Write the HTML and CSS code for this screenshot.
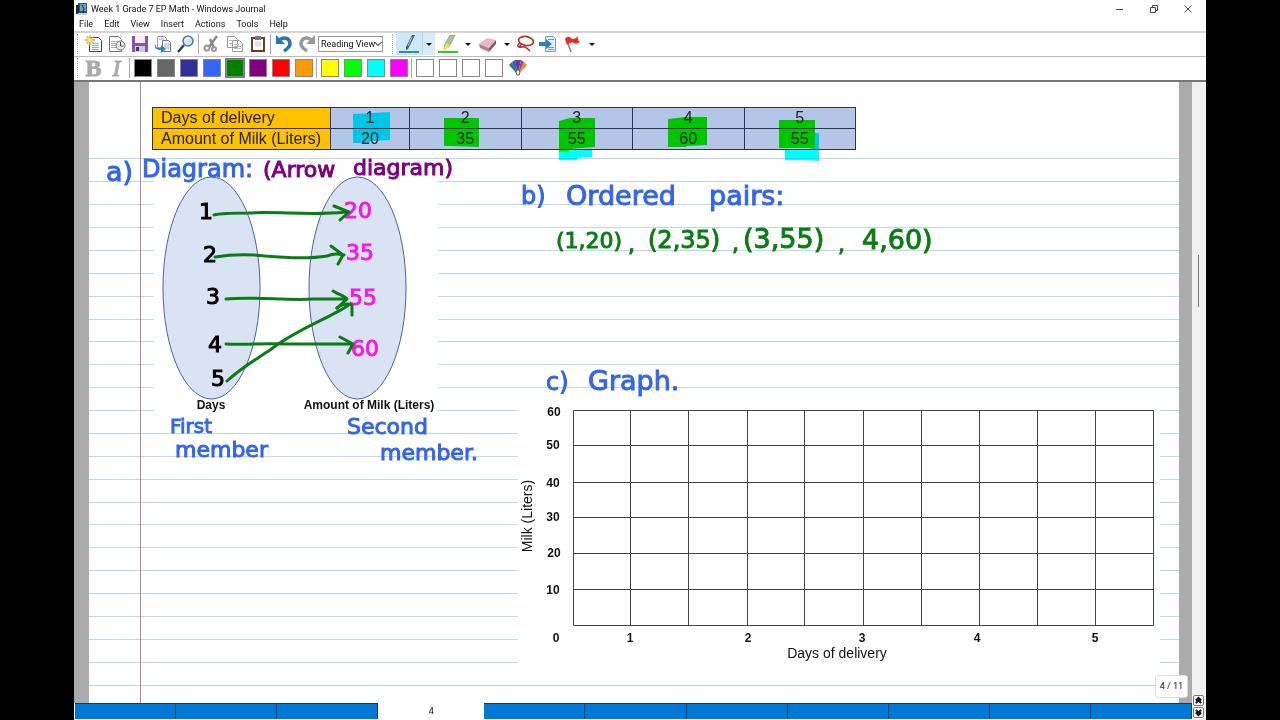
FILE: index.html
```html
<!DOCTYPE html>
<html lang="en">
<head>
<meta charset="utf-8">
<title>Week 1 Grade 7 EP Math - Windows Journal</title>
<link rel="stylesheet" href="styles.css">
</head>
<body>
<div class="window">
  <header class="titlebar">
    <svg class="app-icon" viewBox="0 0 12 12"><path d="M2 0h9v10H2z" fill="#28577c"/><path d="M4 1h6v7H4z" fill="#6ca4c4"/><path d="M0 2h3v9H0z" fill="#172c3d"/><path d="M2 10h9v2H1z" fill="#c5d4dc"/><path d="M6 2l2 4-1 4" stroke="#12222f" fill="none"/></svg>
    <span class="title">Week 1 Grade 7 EP Math - Windows Journal</span>
    <div class="controls">
      <button aria-label="Minimize"><svg viewBox="0 0 10 10"><path d="M1 5.500h7" /></svg></button>
      <button aria-label="Restore"><svg viewBox="0 0 10 10"><path d="M1.500 3.500h5v5h-5zM3.500 3V1.500h5v5H7"/></svg></button>
      <button aria-label="Close"><svg viewBox="0 0 10 10"><path d="M1.500 1.500l7 7m0-7l-7 7"/></svg></button>
    </div>
  </header>
  <nav class="menubar">
    <button>File</button><button>Edit</button><button>View</button><button>Insert</button><button>Actions</button><button>Tools</button><button>Help</button>
  </nav>
  <div class="toolbar">
    <i class="grip"></i>
    <button class="tool" aria-label="New note"><svg viewBox="0 0 18 18"><path d="M4.500 2.500h9l3 3v11h-12z" fill="#fff" stroke="#444"/><path d="M7 8.500h7M7 10.500h7M7 12.500h7M7 14.500h7" stroke="#8bb0cf"/><path d="M5 0v10M0 5h10M1.500 1.500l7 7m0-7l-7 7" stroke="#e8b429" stroke-width="1.400"/><circle cx="5" cy="5" r="2" fill="#fff08a"/></svg></button>
    <button class="tool" aria-label="Note from template"><svg viewBox="0 0 18 18"><path d="M1.500 1.500h9l3 3v12h-12z" fill="#fff" stroke="#777"/><path d="M3 6.500h8M3 8.500h6M3 10.500h5M3 12.500h5" stroke="#aaa"/><circle cx="12.500" cy="10.500" r="4.500" fill="#e2e7ea" stroke="#777"/><path d="M12.500 7v4h3" stroke="#555" fill="none"/></svg></button>
    <button class="tool" aria-label="Save"><svg viewBox="0 0 18 18"><path d="M1 1h16v16H1z" fill="#8256a4"/><path d="M4 1h10v7H4z" fill="#f5edf7"/><path d="M4 11h10v6H4z" fill="#d2c3d9"/><path d="M5 12h3v4H5z" fill="#53336b"/></svg></button>
    <button class="tool" aria-label="Import"><svg viewBox="0 0 18 18"><path d="M3.500 1.500h7l2 2v9h-9z" fill="#fff" stroke="#999"/><path d="M8.500 5.500h6l2 2v9h-8z" fill="#fff" stroke="#777"/><path d="M5 4h5M10 9h5M10 11h5M10 13h5" stroke="#8fb2cc"/><path d="M1 8c1 5 2 5 6 5V10l5 4-5 4v-3C2 15 0 13 1 8z" fill="#2584c5"/></svg></button>
    <button class="tool" aria-label="Find"><svg viewBox="0 0 18 18"><path d="M7 10L1 17" stroke="#343e4a" stroke-width="2.500"/><circle cx="11" cy="6" r="5" fill="#c9e5fa" stroke="#4a79a9" stroke-width="1.500"/><path d="M8 5q2-3 5-1" stroke="#fff" fill="none" stroke-width="1.500"/></svg></button>
    <i class="sep"></i>
    <button class="tool" aria-label="Cut"><svg viewBox="0 0 18 18"><path d="M14 1L6 12M7 4l4 9" stroke="#888" stroke-width="2.500"/><circle cx="4" cy="13" r="2.500" fill="none" stroke="#999" stroke-width="2"/><circle cx="11" cy="14" r="2" fill="none" stroke="#999" stroke-width="2"/></svg></button>
    <button class="tool" aria-label="Copy"><svg viewBox="0 0 18 18"><path d="M1.500 1.500h7l3 3v8h-10zM6.500 5.500h7l3 3v8h-10z" fill="#fff" stroke="#999"/><path d="M3 5.500h5M3 8.500h3M8 9.500h5M8 11.500h7M8 13.500h7" stroke="#bbb"/></svg></button>
    <button class="tool" aria-label="Paste"><svg viewBox="0 0 18 18"><path d="M2 2h14v15H2z" fill="#68401f"/><path d="M4 4h10v11H4z" fill="#fff"/><path d="M6 1h6v4H6z" fill="#777"/><path d="M6 7h6M6 9h6M6 11h6" stroke="#bcc"/></svg></button>
    <i class="sep"></i>
    <button class="tool" aria-label="Undo"><svg viewBox="0 0 18 18"><path d="M4 5c7-4 11-1 11 4 0 3-3 5-6 7" fill="none" stroke="#2875b2" stroke-width="3.500"/><path d="M1 0v9h9z" fill="#2875b2"/></svg></button>
    <button class="tool" aria-label="Redo"><svg viewBox="0 0 18 18"><path d="M14 5C7 1 3 4 3 9c0 3 3 5 6 7" fill="none" stroke="#999" stroke-width="3.500"/><path d="M17 0v9H8z" fill="#999"/></svg></button>
    <select class="view-select" aria-label="View"><option>Reading View</option></select>
    <i class="grip second"></i>
    <button class="tool split on" aria-label="Pen"><svg viewBox="0 0 22 18"><path d="M17 0L10 14l-2 1 0-3L14 0z" fill="#455a6b"/><path d="M14 2l-4 9" stroke="#b6c8d2"/><path d="M1 17h20" stroke="#08734c" stroke-width="1.500"/></svg></button><button class="drop on" aria-label="Pen options"></button>
    <button class="tool split" aria-label="Highlighter"><svg viewBox="0 0 22 18"><path d="M13 0h5L12 12l-5 2 1-5z" fill="#a9c29d" stroke="#789166" stroke-width=".7"/><path d="M9 8l4 2-2 3-5 3z" fill="#f2e544"/><path d="M1 17h20" stroke="#25d31d" stroke-width="2"/></svg></button><button class="drop" aria-label="Highlighter options"></button>
    <button class="tool split" aria-label="Eraser"><svg viewBox="0 0 22 18"><path d="M3 9l8-6 9 2-7 8z" fill="#e8b9c7"/><path d="M3 9l10 4v4L4 13z" fill="#b97b92"/><path d="M13 13l7-8v4l-7 8z" fill="#85576d"/></svg></button><button class="drop" aria-label="Eraser options"></button>
    <button class="tool" aria-label="Lasso"><svg viewBox="0 0 18 18"><ellipse cx="10" cy="6" rx="7.500" ry="4.500" transform="rotate(10 10 6)" fill="none" stroke="#ad332c" stroke-width="1.700"/><path d="M4 8c-4 2-2 5 2 4s5 2 8 4M3 12l3-3" fill="none" stroke="#ad332c" stroke-width="1.500"/></svg></button>
    <button class="tool" aria-label="Insert space"><svg viewBox="0 0 18 18"><path d="M6.500 1.500h8l2 2v13h-10z" fill="#e9f1f7" stroke="#8396a5"/><path d="M9 4.500h6M9 12.500h6M9 14.500h6" stroke="#7996aa"/><path d="M0 7h7V4l6 5-6 5v-3H0z" fill="#2382c3"/></svg></button>
    <button class="tool split" aria-label="Flag"><svg viewBox="0 0 22 18"><path d="M5 3l5 14" stroke="#8c7b70" stroke-width="1.500"/><path d="M4 4q3-4 6-1t7-2q-1 4 2 6-4 3-6 1t-7 2z" fill="#e72e22"/></svg></button><button class="drop" aria-label="Flag options"></button>
  </div>
  <div class="toolbar format">
    <i class="grip"></i>
    <button class="tool letter" aria-label="Bold"><b>B</b></button>
    <button class="tool letter" aria-label="Italic"><em>I</em></button>
    <i class="sep"></i>
    <button class="tool black" aria-label="Black"></button>
    <button class="tool gray" aria-label="Gray"></button>
    <button class="tool navy" aria-label="Dark blue"></button>
    <button class="tool blue" aria-label="Blue"></button>
    <button class="tool green chosen" aria-label="Green"></button>
    <button class="tool purple" aria-label="Purple"></button>
    <button class="tool red" aria-label="Red"></button>
    <button class="tool orange" aria-label="Orange"></button>
    <i class="sep"></i>
    <button class="tool yellow" aria-label="Yellow"></button>
    <button class="tool lime" aria-label="Lime"></button>
    <button class="tool cyan" aria-label="Cyan"></button>
    <button class="tool magenta" aria-label="Magenta"></button>
    <i class="sep"></i>
    <button class="tool empty" aria-label="Custom 1"></button>
    <button class="tool empty" aria-label="Custom 2"></button>
    <button class="tool empty" aria-label="Custom 3"></button>
    <button class="tool empty" aria-label="Custom 4"></button>
    <button class="tool palette" aria-label="More colors"><svg viewBox="0 0 18 18"><path d="M9 16L0 6l3-3z" fill="#287f47"/><path d="M9 16L3 3l3-2z" fill="#2c5fb5"/><path d="M9 16L6 1h3z" fill="#403bc8"/><path d="M9 16V1h3z" fill="#783aa8"/><path d="M9 16l3-15 3 2z" fill="#b13e62"/><path d="M9 16l6-13 3 3z" fill="#df873a"/><path d="M9 10l2 3-1 3H8l-1-3z" fill="#fff" stroke="#555"/></svg></button>
  </div>
  <main class="workspace">
    <div class="desk">
      <section class="paper">
        <svg class="rules" aria-hidden="true"><g transform="translate(-89 -82)">
          <path class="rule" d="M89 158.500h3000M89 181.500h3000M89 204.500h3000M89 227.500h3000M89 250.500h3000M89 273.500h3000M89 296.500h3000M89 319.500h3000M89 341.500h3000M89 364.500h3000M89 387.500h3000M89 410.500h3000M89 433.500h3000M89 456.500h3000M89 479.500h3000M89 502.500h3000M89 524.500h3000M89 547.500h3000M89 570.500h3000M89 593.500h3000M89 616.500h3000M89 639.500h3000M89 662.500h3000M89 685.500h3000"/>
          <path class="margin-line" d="M140.500 82v2000"/>
          <path fill="#fff" d="M154 166h284v256H154zM518 400h642v275H518z"/>
        </g></svg>
        <table class="milk">
          <tr><th>Days of delivery</th><td>1</td><td>2</td><td>3</td><td>4</td><td>5</td></tr>
          <tr><th>Amount of Milk (Liters)</th><td>20</td><td>35</td><td>55</td><td>60</td><td>55</td></tr>
        </table>
        <svg class="marker" aria-hidden="true"><g transform="translate(-89 -82)">
          <path fill="#0ff" d="M353 114l37-2v28l-20 1-1 2h-16zM559 151l33-2v8l-14 1-1 2h-18zM785 149h26v-16h8v28l-15-1h-19z"/>
          <path fill="#0f0" d="M444 118h35v29l-30-1h-5zM559 121l11-3h25v29l-25 2-1 3h-10zM668 119l17-2h22v28l-20 1-1 1h-18zM779 120h36v28h-36z"/>
        </g></svg>
        <svg class="ink"><g transform="translate(-89 -82)">
          <g class="sets"><ellipse cx="211.500" cy="288" rx="48.500" ry="111"/><ellipse cx="357.500" cy="288" rx="48.500" ry="111"/></g>
          <g class="caption"><text x="211" y="409">Days</text><text x="369" y="409">Amount of Milk (Liters)</text></g>
          <g class="hand blue-ink">
            <text class="l" x="106" y="181">a)</text><text class="m" x="142" y="177">Diagram:</text>
            <text class="s" x="170" y="433">First</text><text x="175" y="457">member</text>
            <text x="347" y="434">Second</text><text x="380" y="460">member.</text>
            <text class="m" x="521" y="204">b)</text><text class="l" x="566" y="205">Ordered</text><text class="l" x="709" y="205">pairs:</text>
            <text class="m" x="546" y="390">c)</text><text class="l" x="588" y="390">Graph.</text>
          </g>
          <g class="hand purple-ink"><text x="263" y="177">(Arrow</text><text x="353" y="175">diagram)</text></g>
          <g class="hand black-ink"><text x="199" y="219">1</text><text x="203" y="262">2</text><text x="206" y="304">3</text><text x="208" y="352">4</text><text x="211" y="386">5</text></g>
          <g class="hand pink-ink"><text x="344" y="218">20</text><text x="346" y="260">35</text><text x="349" y="305">55</text><text x="351" y="356">60</text></g>
          <g class="hand green-ink">
            <text x="556" y="248">(1,20)</text><text x="628" y="252">,</text><text class="m" x="648" y="248">(2,35)</text><text x="732" y="251">,</text><text class="l" x="743" y="248">(3,55)</text><text x="838" y="252">,</text><text class="l" x="862" y="249">4,60)</text>
          </g>
          <g class="arrows"><path d="M214 215c8-2 20-2 34-2 31-2 62 3 98-1M334 206l15 6-9 8"/><path d="M215 257c18-3 34-3 50-1 22 2 44 3 62 0 8-3 12-2 17-1M331 246l12 9-5 9"/><path d="M226 299c28-3 61 2 88 0h33M333 291c6 4 12 5 14 8l-10 9"/><path d="M226 344c17 1 40-1 60 0h66M340 337l13 7-5 9"/><path d="M227 381c14-13 28-21 43-31 28-22 63-33 80-46M337 308c5-4 11-5 15-3v10"/></g>
          <path class="grid" d="M573.500 410.500H1153.500V625.500H573.500zM573.500 445.500H1153.500M573.500 482.500H1153.500M573.500 517.500H1153.500M573.500 553.500H1153.500M573.500 589.500H1153.500M630.500 410V626M688.500 410V626M747.500 410V626M804.500 410V626M863.500 410V626M921.500 410V626M979.500 410V626M1037.500 410V626M1095.500 410V626"/>
          <g class="ticks"><text x="554" y="416">60</text><text x="553" y="449">50</text><text x="553" y="487">40</text><text x="553" y="521">30</text><text x="554" y="557">20</text><text x="553" y="594">10</text><text x="556" y="642">0</text><text x="630" y="642">1</text><text x="748" y="642">2</text><text x="862" y="642">3</text><text x="977" y="642">4</text><text x="1095" y="642">5</text></g>
          <g class="axis"><text x="837" y="658">Days of delivery</text><text transform="translate(532 516) rotate(-90)">Milk (Liters)</text></g>
        </g></svg>
      </section>
      <span class="counter">4 / 11</span>
    </div>
    <footer class="pages">
      <button aria-label="Page 1"></button><button aria-label="Page 2"></button><button aria-label="Page 3"></button><button class="current">4</button><button aria-label="Page 5"></button><button aria-label="Page 6"></button><button aria-label="Page 7"></button><button aria-label="Page 8"></button><button aria-label="Page 9"></button><button aria-label="Page 10"></button><button aria-label="Page 11"></button>
    </footer>
    <aside class="scroll">
      <div class="track"><i class="thumb"></i></div>
      <button aria-label="Previous page"><svg viewBox="0 0 10 10"><path d="M2 5l3-3 3 3M2 8l3-3 3 3"/></svg></button>
      <button aria-label="Next page"><svg viewBox="0 0 10 10"><path d="M2 2l3 3 3-3M2 5l3 3 3-3"/></svg></button>
    </aside>
  </main>
</div>
</body>
</html>
```
FILE: styles.css
```css
* { box-sizing: border-box; }
body { margin: 0; background: #000; font: 9px Roboto, "Open Sans", sans-serif; color: #111; }
button { border: 0; padding: 0; margin: 0; background: none; font: inherit; color: inherit; }
.window { display: flex; flex-direction: column; height: 100vh; margin: 0 74px; background: #fff; overflow: hidden; }
.titlebar { display: flex; align-items: center; height: 17px; padding-left: 2px; }
.app-icon { width: 12px; height: 12px; margin-right: 3px; }
.title { flex: 1; white-space: nowrap; }
.controls { display: flex; gap: 24px; padding-right: 13px; }
.controls button { display: flex; }
.controls svg { width: 10px; height: 10px; fill: none; stroke: #444; }
.menubar { display: flex; gap: 11px; height: 14px; padding-left: 5px; line-height: 14px; }
.toolbar { display: flex; align-items: center; height: 25px; padding: 0 0 1px 3px; border-top: 2px solid #d5d5d5; }
.format { border-top: 1px solid #bbb; border-bottom: 2px solid #777; height: 26px; }
.grip { flex: none; width: 1px; height: 20px; margin-right: 4px; border-left: 1px dotted #aaa; }
.grip.second { margin: 0 3px 0 9px; }
.sep { flex: none; width: 3px; height: 20px; background: linear-gradient(90deg, transparent 1px, #aaa 1px, #aaa 2px, transparent 2px); }
.tool { flex: none; display: flex; align-items: center; justify-content: center; width: 23px; height: 22px; }
.tool svg { width: 18px; height: 18px; }
.tool.split { width: 26px; }
.tool.split svg { width: 22px; }
.tool.on { background: #cde8fa; }
.drop { flex: none; display: flex; align-items: center; justify-content: center; width: 13px; height: 22px; }
.drop::after { content: ""; border: 3px solid transparent; border-top-color: #111; border-bottom: 0; }
.drop.on { background: #d5ecfb; border-left: 1px solid #b2d8f0; }
.view-select { appearance: none; width: 65px; height: 16px; padding: 0 0 0 2px; border: 1px solid #999; border-radius: 0; background: linear-gradient(45deg, transparent 50%, #777 50%, #777 65%, transparent 65%) 55px 5px / 4px 4px no-repeat, linear-gradient(-45deg, transparent 50%, #777 50%, #777 65%, transparent 65%) 59px 5px / 4px 4px no-repeat, #fff; font: inherit; color: #111; }
.letter { font: 24px/22px "Liberation Serif", serif; color: #aaa; -webkit-text-stroke: 1px #aaa; }
.format .tool::before { width: 16px; height: 16px; border: 1px solid #888; }
.black::before, .gray::before, .navy::before, .blue::before, .green::before, .purple::before, .red::before, .orange::before, .yellow::before, .lime::before, .cyan::before, .magenta::before, .empty::before { content: ""; }
.black::before { background: #000; }
.gray::before { background: #666; }
.navy::before { background: #303098; }
.blue::before { background: #3366ff; }
.green::before { background: #008000; }
.chosen::before { outline: 1px solid #777; }
.purple::before { background: #800080; }
.red::before { background: #f00; }
.orange::before { background: #ff9900; }
.yellow::before { background: #ff0; }
.lime::before { background: #0f0; }
.cyan::before { background: #0ff; }
.magenta::before { background: #f0f; }
.palette { width: 25px; }
.workspace { flex: 1; display: grid; grid-template: minmax(0, 1fr) 17px / minmax(0, 1fr) 14px; min-height: 0; }
.desk { position: relative; display: flex; min-height: 0; padding: 0 13px 0 15px; background: #ababab; }
.paper { position: relative; flex: 1; min-width: 0; overflow: hidden; padding: 25px 0 0 63px; background: #fff; }
.rules, .marker, .ink { position: absolute; top: 0; left: 0; width: 100%; height: 100%; }
.marker { mix-blend-mode: multiply; }
.rule { stroke: #bcd9e8; }
.margin-line { stroke: #b58596; }
.milk { position: relative; width: 704px; table-layout: fixed; border-collapse: collapse; font: 16px/20px "Liberation Sans", Arial, sans-serif; color: #222; }
.milk th, .milk td { height: 21px; padding: 0; border: 1px solid #2b3448; text-align: center; background: #b4c6e7; }
.milk th { width: 178px; padding-left: 8px; font-weight: normal; text-align: left; white-space: nowrap; background: #ffc000; }
.milk td:nth-child(2) { width: 79px; }
.sets { fill: #dae3f3; stroke: #4a639c; }
.caption, .ticks { font: bold 12px "Liberation Sans", Arial, sans-serif; fill: #111; text-anchor: middle; }
.axis { font: 14px "Liberation Sans", Arial, sans-serif; fill: #111; text-anchor: middle; }
.hand { font: 22px "DejaVu Sans", sans-serif; }
.hand .s { font-size: 20px; }
.hand .m { font-size: 24px; }
.hand .l { font-size: 27px; }
.blue-ink { fill: #3366e8; stroke: #3366e8; }
.purple-ink { fill: #800080; stroke: #800080; }
.black-ink { fill: #000; stroke: #000; }
.pink-ink { fill: #f01be8; stroke: #f01be8; }
.green-ink { fill: #0a7d14; stroke: #0a7d14; }
.arrows { fill: none; stroke: #0a7d14; stroke-width: 3; stroke-linecap: round; stroke-linejoin: round; }
.grid { fill: none; stroke: #444; }
.counter { position: absolute; right: 4px; bottom: 5px; width: 33px; padding: 4px 0; border: 1px solid #ddd; border-radius: 3px; background: #fff; line-height: 13px; text-align: center; }
.scroll { grid-area: 1 / 2 / 3 / 3; display: flex; flex-direction: column; gap: 1px; padding: 0 2px 2px 1px; background: #f0f0f0; }
.track { flex: 1; padding: 173px 5px 0; }
.thumb { display: block; width: 1px; height: 52px; background: #777; }
.scroll button { display: flex; width: 11px; height: 11px; border: 1px solid #777; border-radius: 2px; background: #fff; }
.scroll svg { width: 9px; height: 9px; fill: none; stroke: #111; stroke-width: 2; }
.pages { display: flex; padding: 0 0 1px 1px; background: #fff; }
.pages > button { flex: 1; border: solid #123b60; border-width: 1px 1px 0 0; background: #0078d7; }
.pages > .current { flex: 1 0 6px; border: 0; background: #fff; }
```
